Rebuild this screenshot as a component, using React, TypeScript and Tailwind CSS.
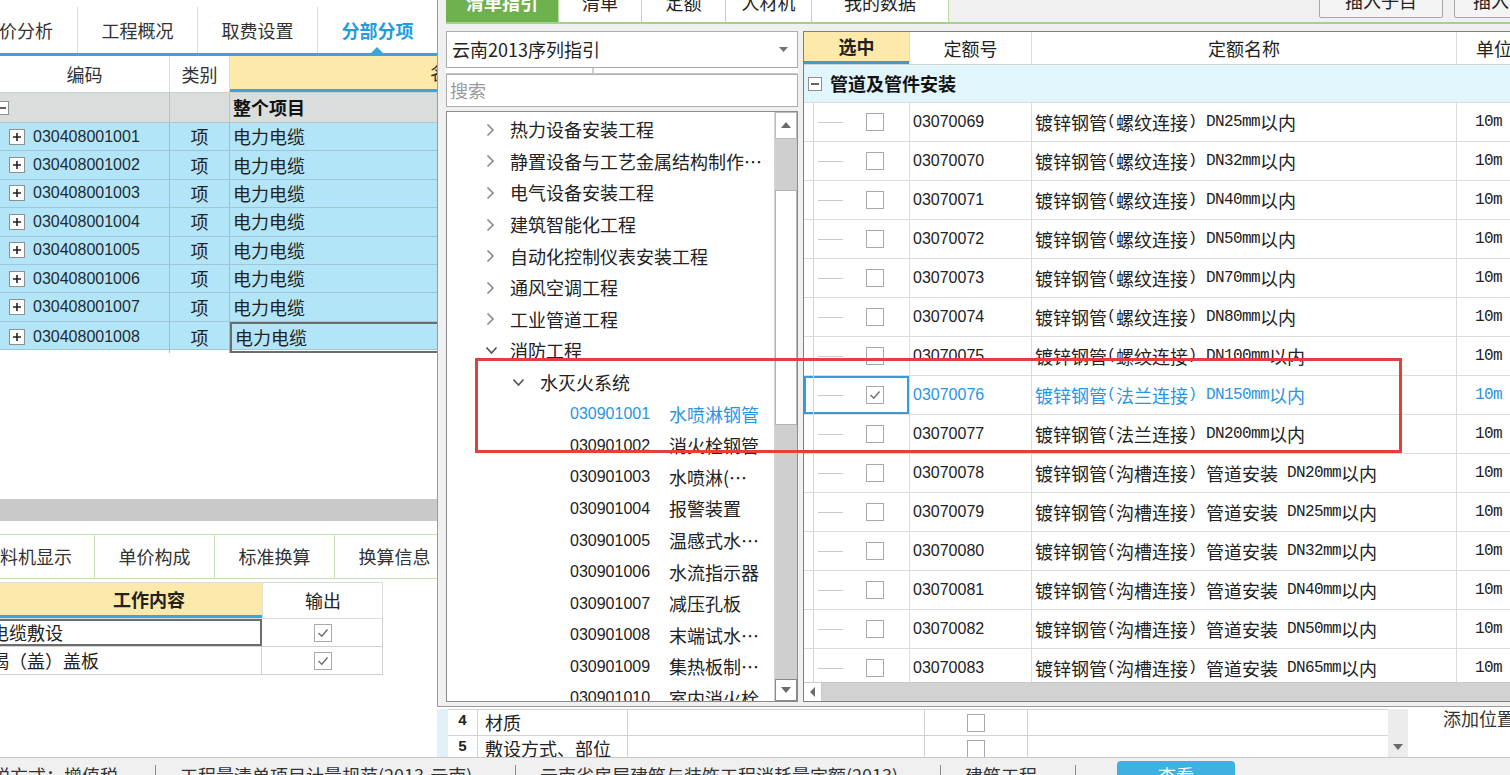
import React from 'react';

const sans = "font-['Liberation_Sans',sans-serif]";
const mono = "font-['Liberation_Mono',monospace]";

function PlusBox() {
  return (
    <svg width="16" height="16" viewBox="0 0 16 16" className="shrink-0">
      <rect x="0.5" y="0.5" width="15" height="15" fill="#fff" stroke="#8f8f8f" />
      <path d="M4 8 H12 M8 4 V12" stroke="#222" strokeWidth="1.6" />
    </svg>
  );
}

function MinusBox({ size = 14 }: { size?: number }) {
  return (
    <svg width={size} height={size} viewBox="0 0 14 14" className="shrink-0">
      <rect x="0.5" y="0.5" width="13" height="13" fill="#fff" stroke="#8f8f8f" />
      <path d="M3 7 H11" stroke="#222" strokeWidth="1.4" />
    </svg>
  );
}

function Box({ checked = false }: { checked?: boolean }) {
  return (
    <svg width="18" height="18" viewBox="0 0 18 18" className="shrink-0">
      <rect x="0.5" y="0.5" width="17" height="17" fill="#fff" stroke="#a9a9a9" />
      {checked && <path d="M4.5 9 L7.8 12.2 L13.5 5.5" stroke="#6e6e6e" strokeWidth="1.4" fill="none" />}
    </svg>
  );
}

function ChevronRight() {
  return (
    <svg width="9" height="14" viewBox="0 0 9 14" className="shrink-0">
      <path d="M1.5 1.5 L7 7 L1.5 12.5" stroke="#8c8c8c" strokeWidth="1.7" fill="none" />
    </svg>
  );
}

function ChevronDown() {
  return (
    <svg width="13" height="9" viewBox="0 0 13 9" className="shrink-0">
      <path d="M1.5 1.5 L6.5 7 L11.5 1.5" stroke="#555" strokeWidth="1.7" fill="none" />
    </svg>
  );
}

function Tri({ dir }: { dir: 'up' | 'down' | 'left' }) {
  const d =
    dir === 'up' ? 'M1 8 L6 2 L11 8 Z' : dir === 'down' ? 'M1 3 L6 9 L11 3 Z' : 'M8 1 L3 6 L8 11 Z';
  return (
    <svg width="12" height="12" viewBox="0 0 12 12">
      <path d={d} fill="#6a6a6a" />
    </svg>
  );
}

const leftCodes = [
  '030408001001',
  '030408001002',
  '030408001003',
  '030408001004',
  '030408001005',
  '030408001006',
  '030408001007',
  '030408001008',
];

function LeftApp() {
  return (
    <div className="w-[437px] shrink-0 flex flex-col bg-white overflow-hidden">
      {/* top tabs */}
      <div className="flex h-[53px] shrink-0 ml-[-43px]">
        {['造价分析', '工程概况', '取费设置', '分部分项'].map((t, i) => (
          <div
            key={t}
            className={`relative w-[120px] shrink-0 mt-[7px] h-[46px] flex items-center justify-center text-[18px] ${
              i > 0 ? 'border-l border-[#dedede]' : ''
            } ${i === 3 ? 'text-[#1f9de0] font-bold' : 'text-[#333]'}`}
          >
            {t}
            {i === 3 && (
              <span className="absolute bottom-0 left-[53px] w-0 h-0 border-x-[6px] border-x-transparent border-b-[6px] border-b-[#3ba5da]" />
            )}
          </div>
        ))}
      </div>
      <div className="h-[3px] shrink-0 bg-[#3ba5da]" />

      {/* upper grid */}
      <div className="grid grid-cols-[170px_60px_1fr] h-[37px] shrink-0 text-[18px] text-[#333] border-b border-[#cfcfcf]">
        <div className="flex items-center justify-center border-r border-[#dcdcdc]">编码</div>
        <div className="flex items-center justify-center border-r border-[#dcdcdc]">类别</div>
        <div className="flex items-center pl-[200px] bg-[#fde9a9] border-b-[3px] border-[#3ba5da] whitespace-nowrap overflow-hidden">
          名称
        </div>
      </div>
      <div className="grid grid-cols-[170px_60px_1fr] h-[30px] shrink-0 bg-[#d9dedd] border-b border-[#b9c1c3] text-[18px]">
        <div className="flex items-center ml-[-5px] border-r border-[#bcc4c6]">
          <MinusBox />
        </div>
        <div className="border-r border-[#bcc4c6]" />
        <div className="flex items-center pl-[3px] font-bold text-[#111]">整个项目</div>
      </div>
      {leftCodes.map((c, i) => (
        <div
          key={c}
          className="grid grid-cols-[170px_60px_1fr] h-[28.4px] shrink-0 bg-[#b3e5f8] border-b border-[#9ec6d4] text-[18px] text-[#222]"
        >
          <div className="flex items-center pl-[9px] gap-[8px] border-r border-[#a3bcc4]">
            <PlusBox />
            <span className={`${sans} text-[16px] text-[#1f2b33]`}>{c}</span>
          </div>
          <div className="flex items-center justify-center border-r border-[#a3bcc4]">项</div>
          <div
            className={`flex items-center pl-[3px] ${
              i === 7 ? 'border-t-2 border-l-2 border-b-2 border-[#6d6d6d] pl-[1px]' : ''
            }`}
          >
            电力电缆
          </div>
        </div>
      ))}
      <div className="h-[149px] shrink-0" />
      <div className="h-[22px] shrink-0 bg-[#c9c9c9]" />
      <div className="h-[13px] shrink-0" />

      {/* lower tabs */}
      <div className="flex h-[45px] shrink-0 border-y border-[#c6e1b6] text-[18px] text-[#333]">
        <div className="ml-[-40px] w-[135px] shrink-0 flex items-center justify-center border-r border-[#c6e1b6] whitespace-nowrap">
          工料机显示
        </div>
        {['单价构成', '标准换算', '换算信息'].map((t) => (
          <div key={t} className="w-[120px] shrink-0 flex items-center justify-center border-r border-[#c6e1b6]">
            {t}
          </div>
        ))}
      </div>

      {/* lower grid */}
      <div className="mt-[3px] w-[383px] text-[18px] text-[#222]">
        <div className="grid grid-cols-[262px_121px] h-[37px] border border-l-0 border-[#dcdcdc]">
          <div className="flex items-center justify-center pl-[36px] font-bold bg-[#fde9a9] border-b-[3px] border-[#3ba5da]">
            工作内容
          </div>
          <div className="flex items-center justify-center border-l border-[#dcdcdc]">输出</div>
        </div>
        <div className="grid grid-cols-[262px_121px] h-[28px] border-b border-r border-[#cfcfcf]">
          <div className="flex items-center overflow-hidden border-2 border-l-0 border-[#6d6d6d] whitespace-nowrap">
            <span className="ml-[-9px]">电缆敷设</span>
          </div>
          <div className="flex items-center justify-center">
            <Box checked />
          </div>
        </div>
        <div className="grid grid-cols-[262px_121px] h-[28px] border-b border-r border-[#cfcfcf]">
          <div className="flex items-center overflow-hidden border-r border-[#cfcfcf] whitespace-nowrap">
            <span className="ml-[-9px]">揭（盖）盖板</span>
          </div>
          <div className="flex items-center justify-center">
            <Box checked />
          </div>
        </div>
      </div>
    </div>
  );
}

function AttrRows() {
  const rows = [
    ['4', '材质'],
    ['5', '敷设方式、部位'],
  ];
  return (
    <div className="h-[48px] shrink-0 flex overflow-hidden text-[18px] text-[#222]">
      <div className="w-[11px] shrink-0 bg-[#e2f1f8]" />
      <div className="w-[940px] shrink-0 flex flex-col">
        {rows.map(([n, t]) => (
          <div key={n} className="flex h-[26px] shrink-0 border-t border-[#d3d3d3]">
            <div className={`w-[30px] flex items-center justify-center border-r border-[#d3d3d3] ${mono} text-[15px] font-bold`}>
              {n}
            </div>
            <div className="w-[150px] flex items-center pl-[7px] border-r border-[#d3d3d3] whitespace-nowrap">{t}</div>
            <div className="w-[297px] border-r border-[#d3d3d3]" />
            <div className="w-[103px] flex items-center justify-center border-r border-[#d3d3d3]">
              <Box />
            </div>
            <div className="flex-1" />
          </div>
        ))}
      </div>
      <div className="w-[20px] shrink-0 bg-[#ececec] flex flex-col justify-end items-center pb-[4px]">
        <Tri dir="down" />
      </div>
      <div className="flex-1 pl-[35px] leading-[18px] text-[#333] whitespace-nowrap">添加位置</div>
    </div>
  );
}

function StatusBar() {
  return (
    <div className="h-[36px] shrink-0 flex items-center bg-[#f0f0f0] border-t border-[#c8c8c8] text-[18px] text-[#333] whitespace-nowrap">
      <div className="w-[155px] shrink-0 overflow-hidden">
        <span className="ml-[-26px] inline-block">计税方式：增值税</span>
      </div>
      <div className="w-px h-[22px] bg-[#8a8a8a]" />
      <div className="w-[359px] shrink-0 pl-[24px]">工程量清单项目计量规范(2013-云南)</div>
      <div className="w-px h-[22px] bg-[#8a8a8a]" />
      <div className="w-[424px] shrink-0 pl-[24px]">云南省房屋建筑与装饰工程消耗量定额(2013)</div>
      <div className="w-px h-[22px] bg-[#8a8a8a]" />
      <div className="w-[134px] shrink-0 pl-[24px]">建筑工程</div>
      <div className="w-px h-[22px] bg-[#8a8a8a]" />
      <div className="ml-[41px] w-[118px] h-[30px] rounded-sm bg-[#3eb0e2] text-white flex items-center justify-center">
        查看
      </div>
    </div>
  );
}

type TreeItem = { lv: 0 | 1 | 2; text: string; code?: string; open?: boolean; active?: boolean };

const tree: TreeItem[] = [
  { lv: 0, text: '热力设备安装工程' },
  { lv: 0, text: '静置设备与工艺金属结构制作…' },
  { lv: 0, text: '电气设备安装工程' },
  { lv: 0, text: '建筑智能化工程' },
  { lv: 0, text: '自动化控制仪表安装工程' },
  { lv: 0, text: '通风空调工程' },
  { lv: 0, text: '工业管道工程' },
  { lv: 0, text: '消防工程', open: true },
  { lv: 1, text: '水灭火系统', open: true },
  { lv: 2, code: '030901001', text: '水喷淋钢管', active: true },
  { lv: 2, code: '030901002', text: '消火栓钢管' },
  { lv: 2, code: '030901003', text: '水喷淋(…' },
  { lv: 2, code: '030901004', text: '报警装置' },
  { lv: 2, code: '030901005', text: '温感式水…' },
  { lv: 2, code: '030901006', text: '水流指示器' },
  { lv: 2, code: '030901007', text: '减压孔板' },
  { lv: 2, code: '030901008', text: '末端试水…' },
  { lv: 2, code: '030901009', text: '集热板制…' },
  { lv: 2, code: '030901010', text: '室内消火栓' },
];

function TreeRow({ it }: { it: TreeItem }) {
  if (it.lv === 2) {
    return (
      <div
        className={`h-[31.6px] shrink-0 flex items-center pl-[123px] whitespace-nowrap ${
          it.active ? 'text-[#2a95e2]' : 'text-[#222]'
        }`}
      >
        <span className={`${sans} text-[16px] w-[99px] shrink-0`}>{it.code}</span>
        <span>{it.text}</span>
      </div>
    );
  }
  if (it.lv === 1) {
    return (
      <div className="h-[31.6px] shrink-0 flex items-center pl-[65px] gap-[15px] whitespace-nowrap">
        <ChevronDown />
        <span>{it.text}</span>
      </div>
    );
  }
  return (
    <div className="h-[31.6px] shrink-0 flex items-center pl-[38px] whitespace-nowrap">
      <span className="w-[25px] flex">{it.open ? <ChevronDown /> : <span className="ml-[1px] flex"><ChevronRight /></span>}</span>
      <span>{it.text}</span>
    </div>
  );
}

const quotas: [string, string, string, string?][] = [
  ['03070069', '螺纹连接', 'DN25mm'],
  ['03070070', '螺纹连接', 'DN32mm'],
  ['03070071', '螺纹连接', 'DN40mm'],
  ['03070072', '螺纹连接', 'DN50mm'],
  ['03070073', '螺纹连接', 'DN70mm'],
  ['03070074', '螺纹连接', 'DN80mm'],
  ['03070075', '螺纹连接', 'DN100mm'],
  ['03070076', '法兰连接', 'DN150mm'],
  ['03070077', '法兰连接', 'DN200mm'],
  ['03070078', '沟槽连接', 'DN20mm', '管道安装'],
  ['03070079', '沟槽连接', 'DN25mm', '管道安装'],
  ['03070080', '沟槽连接', 'DN32mm', '管道安装'],
  ['03070081', '沟槽连接', 'DN40mm', '管道安装'],
  ['03070082', '沟槽连接', 'DN50mm', '管道安装'],
  ['03070083', '沟槽连接', 'DN65mm', '管道安装'],
];

function QuotaGrid() {
  return (
    <div className="flex-1 min-w-0 flex flex-col bg-white border border-[#7f7f7f] text-[18px] text-[#222]">
      <div className="grid grid-cols-[105px_122px_425px_1fr] h-[33px] shrink-0 border-b border-[#d2d2d2]">
        <div className="flex items-center justify-center font-bold bg-[#fde9a9] border-b-[3px] border-[#3b9bd8]">选中</div>
        <div className="flex items-center justify-center border-l border-[#dcdcdc]">定额号</div>
        <div className="flex items-center justify-center border-l border-[#dcdcdc]">定额名称</div>
        <div className="flex items-center pl-[19px] border-l border-[#dcdcdc]">单位</div>
      </div>
      <div className="flex-1 min-h-0 overflow-hidden">
        <div className="h-[38px] flex items-center pl-[4px] gap-[8px] bg-[#e1f5fd] border-b border-[#d6dfe3]">
          <MinusBox />
          <span className="font-bold text-[#111]">管道及管件安装</span>
        </div>
        {quotas.map(([code, kind, dn, extra], i) => {
          const sel = i === 7;
          return (
            <div
              key={code}
              className={`grid grid-cols-[105px_122px_425px_1fr] h-[39px] border-b border-[#dcdcdc] ${
                sel ? 'text-[#2a95e2]' : ''
              }`}
            >
              <div className={`flex items-stretch ${sel ? 'ring-2 ring-inset ring-[#3b9bd8]' : ''}`}>
                <div className="w-[9px] shrink-0" />
                <div className="w-px shrink-0 bg-[#d3d3d3]" />
                <div className="w-[4px] shrink-0" />
                <div className="w-[25px] shrink-0 flex items-center">
                  <div className="w-full h-px bg-[#cacaca]" />
                </div>
                <div className="ml-[23px] flex items-center">
                  <Box checked={sel} />
                </div>
              </div>
              <div className={`flex items-center pl-[3px] border-l border-[#dcdcdc] ${sans} text-[16px]`}>{code}</div>
              <div className="flex items-center pl-[3px] border-l border-[#dcdcdc] whitespace-nowrap">
                <span>镀锌钢管</span>
                <span className={`${mono} text-[15px]`}>(</span>
                <span>{kind}</span>
                <span className={`${mono} text-[15px] whitespace-pre`}>) </span>
                {extra && (
                  <>
                    <span>{extra}</span>
                    <span className={`${mono} text-[15px] whitespace-pre`}> </span>
                  </>
                )}
                <span className={`${mono} text-[16px] tracking-[-0.6px]`}>{dn}</span>
                <span>以内</span>
              </div>
              <div className={`flex items-center pl-[18px] border-l border-[#dcdcdc] ${mono} text-[16px] tracking-[-0.6px]`}>10m</div>
            </div>
          );
        })}
      </div>
      <div className="h-[19px] shrink-0 flex border-t border-[#c9c9c9]">
        <div className="w-[18px] flex items-center justify-center bg-white border-r border-[#c9c9c9]">
          <Tri dir="left" />
        </div>
        <div className="flex-1 bg-[#d2d2d2]" />
      </div>
    </div>
  );
}

function Dialog() {
  const tabs = [
    ['清单指引', 'w-[113px]'],
    ['清单', 'w-[83px]'],
    ['定额', 'w-[84px]'],
    ['人材机', 'w-[86px]'],
    ['我的数据', 'w-[137px]'],
  ];
  return (
    <div className="absolute left-[437px] top-[-18px] w-[1100px] h-[725px] flex flex-col pl-[8px] bg-[#f0f0f0] border-l border-b border-[#9a9a9a] text-[18px] text-[#222]">
      <div className="flex h-[40px] shrink-0">
        {tabs.map(([t, w], i) => (
          <div
            key={t}
            className={`${w} shrink-0 flex items-center justify-center border-r border-[#b9dda4] ${
              i === 0 ? 'bg-[#6db24d] text-white font-bold' : 'bg-white'
            }`}
          >
            {t}
          </div>
        ))}
        <div className="ml-[370px] w-[124px] h-[36px] shrink-0 flex items-center justify-center bg-[#f4f4f4] border border-[#a8a8a8] rounded-[2px]">
          插入子目
        </div>
        <div className="ml-[11px] w-[110px] h-[36px] shrink-0 flex items-center justify-center bg-[#f4f4f4] border border-[#a8a8a8] rounded-[2px]">
          插入清单
        </div>
      </div>
      <div className="h-[2px] shrink-0 bg-[#a3d388]" />

      <div className="flex-1 min-h-0 flex gap-[5px] pt-[7px] pb-[4px]">
        {/* left column */}
        <div className="w-[352px] shrink-0 flex flex-col">
          <div className="h-[37px] shrink-0 flex items-center justify-between pl-[5px] pr-[9px] bg-white border border-[#acacac]">
            <span>云南2013序列指引</span>
            <svg width="9" height="5" viewBox="0 0 9 5">
              <path d="M0 0 H9 L4.5 5 Z" fill="#707070" />
            </svg>
          </div>
          <div className="h-[6px] shrink-0 flex border-b border-[#c8c8c8]">
            <div className="w-[148px] bg-white border-r-2 border-[#d0d0d0]" />
            <div className="flex-1 bg-white" />
          </div>
          <div className="h-[33px] shrink-0 flex items-center pl-[3px] bg-white border border-[#acacac] text-[#9a9a9a]">
            搜索
          </div>
          <div className="mt-[4px] flex-1 min-h-0 flex bg-white border border-[#8c8c8c]">
            <div className="flex-1 min-w-0 overflow-hidden pt-[2px] flex flex-col">
              {tree.map((it) => (
                <TreeRow key={(it.code ?? '') + it.text} it={it} />
              ))}
            </div>
            <div className="w-[23px] shrink-0 flex flex-col border-l border-[#d4d4d4]">
              <div className="h-[27px] shrink-0 flex items-center justify-center bg-white border border-[#bdbdbd]">
                <Tri dir="up" />
              </div>
              <div className="flex-1 bg-[#cfcfcf] pt-[51px]">
                <div className="h-[235px] bg-white border border-[#b3b3b3]" />
              </div>
              <div className="h-[22px] shrink-0 flex items-center justify-center bg-white border border-[#8a8a8a]">
                <Tri dir="down" />
              </div>
            </div>
          </div>
        </div>

        <QuotaGrid />
      </div>
    </div>
  );
}

export default function App() {
  return (
    <div className="relative w-[1510px] h-[775px] overflow-hidden bg-white font-['Noto_Sans_CJK_SC',sans-serif] text-[#222]">
      <div className="flex flex-col h-full">
        <div className="flex h-[757px] shrink-0">
          <LeftApp />
          <div className="flex-1 flex flex-col justify-end bg-white">
            <AttrRows />
          </div>
        </div>
        <StatusBar />
      </div>

      <Dialog />

      {/* red highlight box drawn over the dialog */}
      <div className="absolute left-[475px] top-[358px] w-[927px] h-[95px] border-[3px] border-[#e2403d]" />
    </div>
  );
}
